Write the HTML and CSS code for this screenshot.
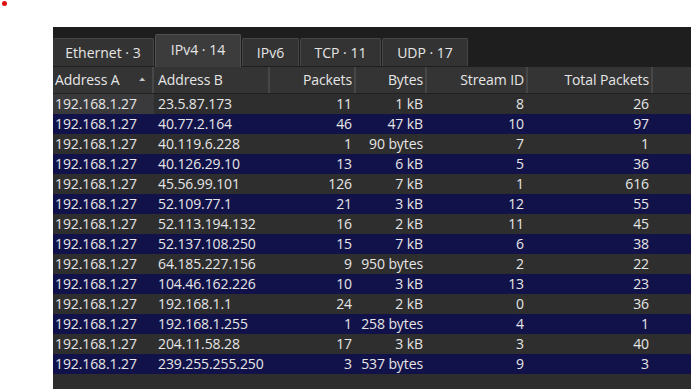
FILE: index.html
```html
<!DOCTYPE html>
<html lang="en">
<head>
    <meta charset="UTF-8">
    <title>Conversations</title>
    <link rel="stylesheet" href="styles.css">
</head>
<body>
    <span class="record-dot"></span>
    <div class="panel">
        <div class="tabs">
            <div class="tab tab-eth">Ethernet · 3</div>
            <div class="tab tab-active">IPv4 · 14</div>
            <div class="tab tab-ipv6">IPv6</div>
            <div class="tab tab-tcp">TCP · 11</div>
            <div class="tab tab-udp">UDP · 17</div>
        </div>
        <div class="grid header">
            <div class="hcell left">Address A <span class="sort">&#9650;</span></div>
            <div class="hcell left addr-b">Address B</div>
            <div class="hcell">Packets</div>
            <div class="hcell">Bytes</div>
            <div class="hcell">Stream ID</div>
            <div class="hcell">Total Packets</div>
            <div class="hcell last"></div>
        </div>
        <div id="rows"></div>
    </div>

    <script>
        const conversations = [
            ['23.5.87.173', 11, '1 kB', 8, 26],
            ['40.77.2.164', 46, '47 kB', 10, 97],
            ['40.119.6.228', 1, '90 bytes', 7, 1],
            ['40.126.29.10', 13, '6 kB', 5, 36],
            ['45.56.99.101', 126, '7 kB', 1, 616],
            ['52.109.77.1', 21, '3 kB', 12, 55],
            ['52.113.194.132', 16, '2 kB', 11, 45],
            ['52.137.108.250', 15, '7 kB', 6, 38],
            ['64.185.227.156', 9, '950 bytes', 2, 22],
            ['104.46.162.226', 10, '3 kB', 13, 23],
            ['192.168.1.1', 24, '2 kB', 0, 36],
            ['192.168.1.255', 1, '258 bytes', 4, 1],
            ['204.11.58.28', 17, '3 kB', 3, 40],
            ['239.255.255.250', 3, '537 bytes', 9, 3]
        ];

        const rows = document.getElementById('rows');
        conversations.forEach((c, i) => {
            const row = document.createElement('div');
            row.className = 'grid row ' + (i % 2 ? 'odd' : 'even');
            row.innerHTML = `
                <div class="cell left${i === 0 ? ' current' : ''}">192.168.1.27</div>
                <div class="cell left addr-b">${c[0]}</div>
                <div class="cell">${c[1]}</div>
                <div class="cell">${c[2]}</div>
                <div class="cell">${c[3]}</div>
                <div class="cell">${c[4]}</div>
                <div class="cell"></div>
            `;
            rows.appendChild(row);
        });
    </script>
</body>
</html>
```

FILE: styles.css
```css
body {
    margin: 0;
    background: #ffffff;
    font-family: "Open Sans", "Noto Sans", sans-serif;
    font-size: 13px;
    color: #e6e6e6;
}
.record-dot {
    position: absolute;
    left: 2px;
    top: 1px;
    width: 5px;
    height: 5px;
    border-radius: 50%;
    background: #e01010;
}
.panel {
    margin: 27px 0 0 53px;
    height: 362px;
    background: #2d2d2d;
    overflow: hidden;
}
.tabs {
    height: 40px;
    background: #1e1e1e;
    display: flex;
    align-items: flex-end;
    gap: 1px;
    box-sizing: border-box;
}
.tab {
    height: 28px;
    margin-bottom: 1px;
    box-sizing: border-box;
    background: #333333;
    border: 1px solid #474747;
    border-bottom: none;
    border-radius: 2px 2px 0 0;
    display: flex;
    align-items: center;
    justify-content: center;
    color: #e6e6e6;
    font-size: 14px;
}
.tab-eth {
    width: 101px;
    border-left: none;
}
.tab-active {
    width: 86px;
    height: 33px;
    margin-bottom: 0;
    background: #3c3c3c;
    border-color: #505050;
    padding-bottom: 3px;
}
.tab-ipv6 { width: 57px; }
.tab-tcp { width: 81px; }
.tab-udp { width: 86px; }
.grid {
    display: grid;
    grid-template-columns: 101px 116px 86px 71px 101px 125px 1fr;
}
.header {
    height: 27px;
    background: #343434;
    border-bottom: 1px solid #222222;
    box-sizing: border-box;
}
.hcell {
    border-right: 2px solid #474747;
    text-align: right;
    padding: 0 2px;
    line-height: 26px;
    font-size: 14px;
    letter-spacing: -0.1px;
    white-space: nowrap;
    position: relative;
}
.hcell.last {
    border-right: none;
}
.hcell.left {
    text-align: left;
}
.sort {
    position: absolute;
    right: 5px;
    top: -1px;
    font-size: 10px;
    transform: scaleY(0.6);
    color: #c4c4c4;
}
.row {
    height: 20px;
    line-height: 20px;
}
.even {
    background: #2e2e2e;
}
.odd {
    background: #12124a;
}
.cell {
    text-align: right;
    padding: 0 4px 0 2px;
    white-space: nowrap;
    font-size: 14px;
    letter-spacing: -0.1px;
}
.cell.left {
    text-align: left;
    padding-left: 2px;
    padding-right: 0;
}
.hcell.addr-b,
.cell.addr-b {
    padding-left: 4px;
}
.cell.current {
    background: #3a3a3c;
}
```
